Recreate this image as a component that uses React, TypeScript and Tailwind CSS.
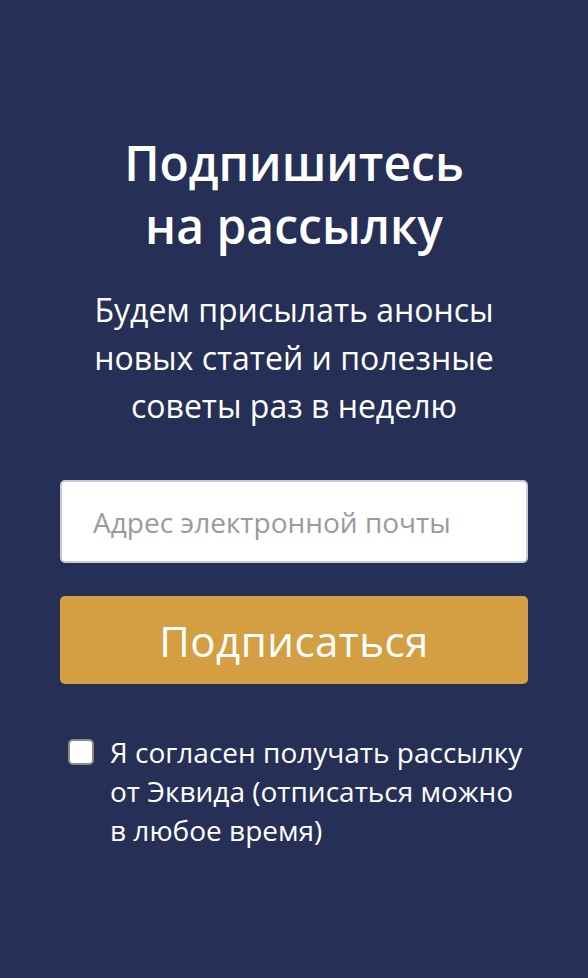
export default function App() {
  return (
    <div
      className="min-h-[978px] w-full bg-[#262f56] flex flex-col items-center px-[60px] pt-[131px]"
      style={{ fontFamily: '"Open Sans", "Noto Sans", sans-serif' }}
    >
      <h1 className="text-white text-[48px] leading-[63px] font-semibold text-center whitespace-nowrap">
        Подпишитесь
        <br />
        на рассылку
      </h1>
      <p className="mt-[29px] text-white text-[32px] leading-[48px] text-center whitespace-nowrap">
        Будем присылать анонсы
        <br />
        новых статей и полезные
        <br />
        советы раз в неделю
      </p>
      <form className="mt-[50px] w-full flex flex-col" onSubmit={(e) => e.preventDefault()}>
        <input
          type="email"
          placeholder="Адрес электронной почты"
          className="w-full h-[83px] rounded-[5px] bg-white border-2 border-[#c3cad8] px-[31px] text-[28px] text-[#333] placeholder:text-[#9b9b9b] outline-none"
        />
        <button
          type="submit"
          className="mt-[33px] w-full h-[88px] rounded-[5px] bg-[#d49f42] text-white text-[42px] tracking-[0.5px]"
        >
          Подписаться
        </button>
        <label className="mt-[49px] flex items-start gap-[16px] pl-[8px]">
          <span className="mt-[6px] shrink-0 w-[26px] h-[26px] rounded-[5px] bg-white border-2 border-[#8a8a8a]" />
          <span className="text-white text-[28px] leading-[39px] whitespace-nowrap">
            Я согласен получать рассылку
            <br />
            от Эквида (отписаться можно
            <br />в любое время)
          </span>
        </label>
      </form>
    </div>
  );
}
